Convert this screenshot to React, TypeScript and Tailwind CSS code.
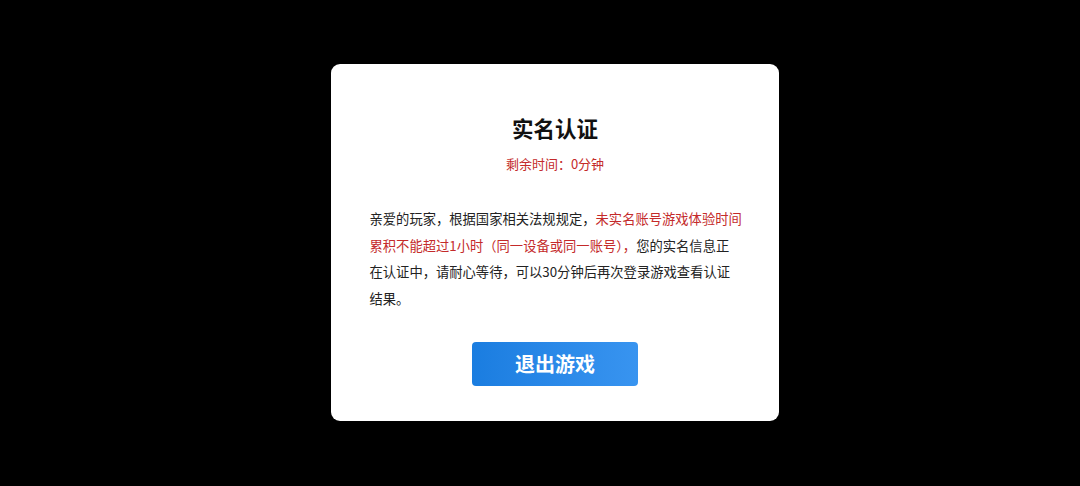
import React from "react";

export default function App() {
  const font = { fontFamily: '"Noto Sans CJK SC", "Noto Sans", sans-serif' };
  return (
    <div className="w-[1080px] h-[486px] bg-black flex items-start pt-[64px] pl-[331px]" style={font}>
      <div className="w-[448px] h-[357px] bg-white rounded-[9px] flex flex-col items-center pt-[49px]">
        <div className="text-[21.5px] leading-[30px] font-bold text-[#111111]">实名认证</div>
        <div className="mt-[11px] text-[13px] leading-[20px] text-[#c42a2a]">剩余时间：0分钟</div>
        <div className="mt-[32px] w-[375px] pl-[2px] text-[13.3px] leading-[26.5px] text-[#222222]">
          亲爱的玩家，根据国家相关法规规定，
          <span className="text-[#c42a2a]">未实名账号游戏体验时间累积不能超过1小时（同一设备或同一账号），</span>
          您的实名信息正在认证中，请耐心等待，可以30分钟后再次登录游戏查看认证结果。
        </div>
        <button className="mt-[30px] w-[166px] h-[44px] rounded-[4px] bg-gradient-to-r from-[#1a7de0] to-[#3894f0] text-white text-[20px] font-bold">
          退出游戏
        </button>
      </div>
    </div>
  );
}
